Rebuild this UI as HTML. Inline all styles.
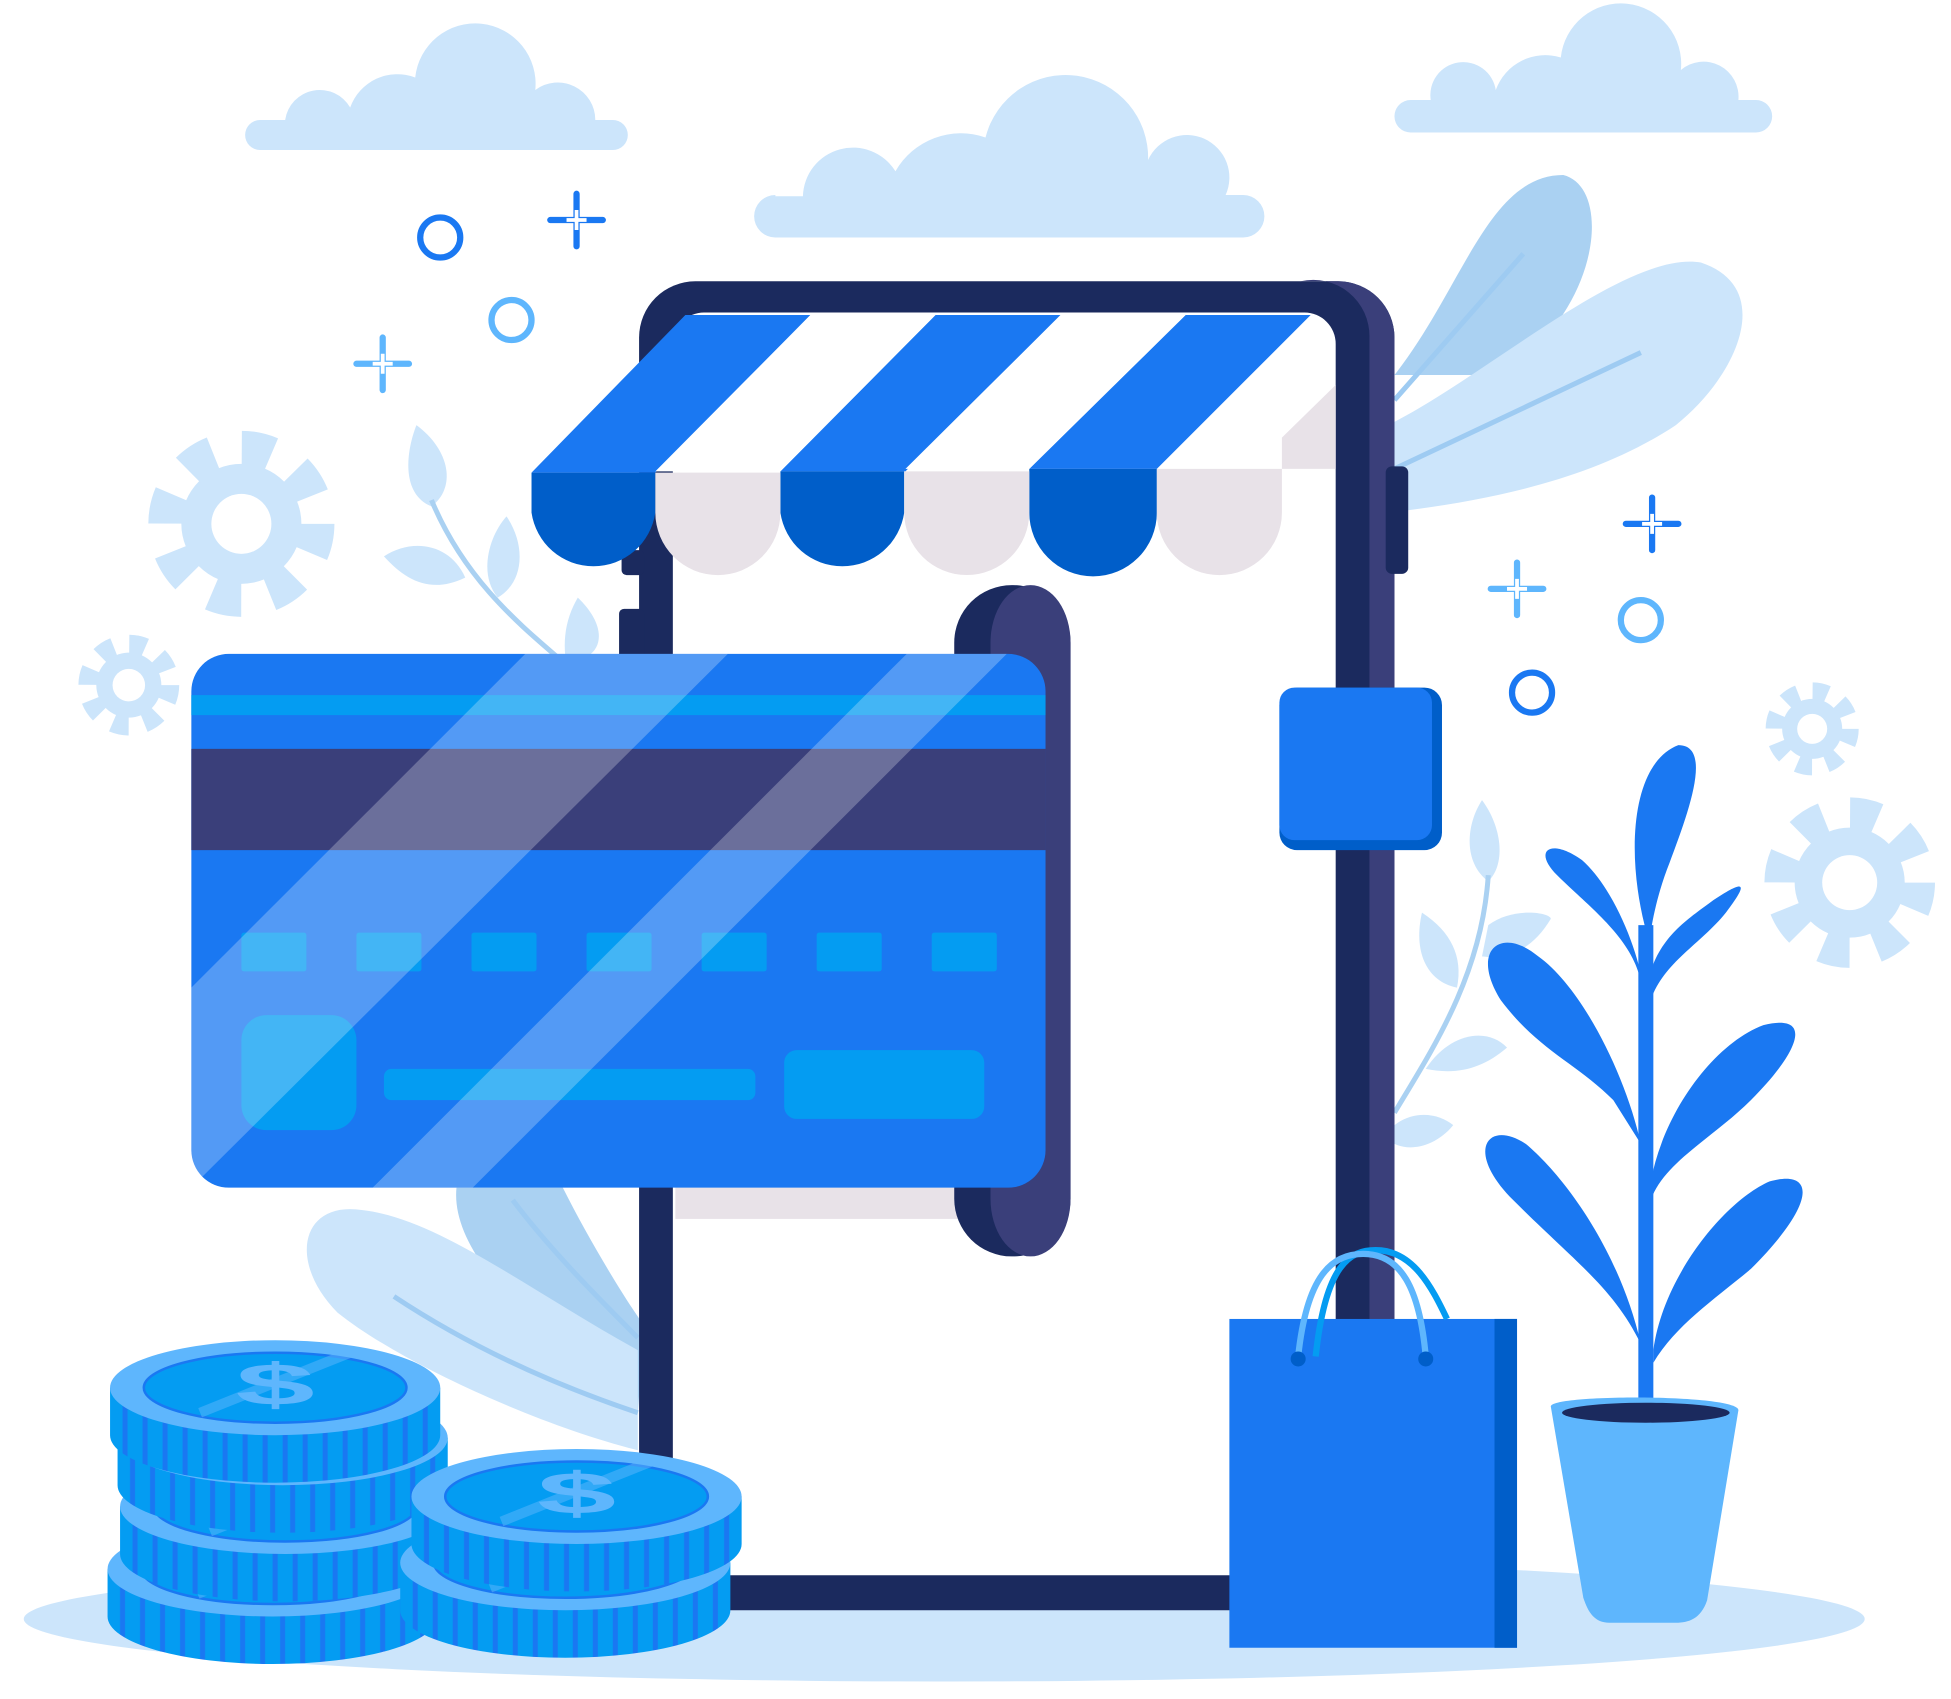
<!DOCTYPE html>
<html><head><style>html,body{margin:0;padding:0;background:#fff}svg{display:block}</style></head><body>
<svg width="1951" height="1699" viewBox="0 0 1560 1359" preserveAspectRatio="none" xmlns="http://www.w3.org/2000/svg">
<defs>
<pattern id="ribs" patternUnits="userSpaceOnUse" width="16" height="10" x="-132"><rect x="0" y="0" width="16" height="10" fill="#049cf2"/><rect x="10" y="0" width="4" height="10" fill="#1a78f2"/></pattern>
<g id="coin">
<path d="M-132 0 V38 A132 38 0 0 0 132 38 V0 Z" fill="url(#ribs)"/>
<ellipse cx="0" cy="0" rx="132" ry="38" fill="#5eb6fd"/>
<ellipse cx="0" cy="0" rx="105" ry="28" fill="#049cf2" stroke="#1a78f2" stroke-width="2"/>
<path d="M-60 20 L60 -28" stroke="#5eb6fd" stroke-width="8" opacity="0.5"/>
<text x="0" y="22" text-anchor="middle" font-family="Liberation Sans, sans-serif" font-weight="bold" font-size="76" fill="#5eb6fd" transform="scale(1.5,0.62)">$</text>
</g>
<g id="gear"><circle r="40" fill="#cce5fb"/><circle r="50" fill="none" stroke="#cce5fb" stroke-width="24" stroke-dasharray="20 19.3"/><circle r="20" fill="#fff"/></g>
</defs>
<ellipse cx="755" cy="1295" rx="736" ry="50" fill="#cce5fb"/>
<!-- clouds -->
<g fill="#cce5fb">
<path d="M208 96h20a28 28 0 0 1 52-10a40 40 0 0 1 52-24a48 48 0 0 1 96 10a30 30 0 0 1 48 24h14a12 12 0 0 1 0 24H208a12 12 0 0 1 0-24z"/>
<path d="M620 157h22a40 40 0 0 1 74-20a60 60 0 0 1 72-27a66 66 0 0 1 130 18a34 34 0 0 1 62 28h14a17 17 0 0 1 0 34H620a17 17 0 0 1 0-34z"/>
<path d="M1128 80h16a22 22 0 0 1 52-8a42 42 0 0 1 52-26a48 48 0 0 1 96 10a28 28 0 0 1 46 24h14a12 12 0 0 1 0 26H1128a12 12 0 0 1 0-26z"/>
</g>
<!-- leaves background -->
<path d="M1115 300 C1170 230 1190 140 1250 140 C1290 150 1280 250 1200 300 Z" fill="#aad1f2"/>
<path d="M1110 340 C1190 300 1300 200 1360 210 C1420 230 1390 300 1340 340 C1280 380 1200 400 1110 410 Z" fill="#cce5fb"/>
<path d="M1115 320 L1218 203 M1115 375 L1312 282" stroke="#9ecbf2" stroke-width="4" fill="none"/>
<path d="M510 1130 C420 1060 360 1000 365 950 L450 950 C470 990 500 1040 515 1060 Z" fill="#aad1f2"/>
<path d="M510 1160 C430 1140 320 1090 270 1050 C230 1010 240 960 290 968 C350 975 420 1030 510 1080 Z" fill="#cce5fb"/>
<path d="M315 1037 C380 1080 450 1110 510 1130 M410 960 C440 1000 480 1040 510 1070" stroke="#9ecbf2" stroke-width="4" fill="none"/>
<!-- small vines -->
<g fill="#cce5fb">
<path d="M333 340 C360 360 365 390 345 405 C320 395 325 360 333 340Z"/>
<path d="M307 445 C330 430 360 435 372 462 C345 475 325 465 307 445Z"/>
<path d="M405 413 C420 435 420 465 398 478 C383 460 390 430 405 413Z"/>
<path d="M462 478 C480 495 485 515 470 525 L452 525 C450 505 455 490 462 478Z"/>
<path d="M1185 640 C1200 660 1205 690 1190 705 C1170 690 1172 660 1185 640Z"/>
<path d="M1137 730 C1160 745 1170 765 1165 790 C1140 785 1130 760 1137 730Z"/>
<path d="M1190 740 C1210 725 1240 730 1240 735 C1225 760 1205 768 1185 765Z"/>
<path d="M1140 855 C1160 825 1190 822 1205 838 C1185 855 1165 860 1140 855Z"/>
<path d="M1115 900 C1130 888 1150 890 1162 900 C1150 915 1130 922 1115 915Z"/>
</g>
<path d="M345 400 C370 460 410 495 445 525 M1190 700 C1185 780 1145 840 1115 890" stroke="#aad1f2" stroke-width="4" fill="none"/>
<!-- sparkles -->
<g fill="none" stroke-width="5">
<circle cx="352" cy="190" r="16" stroke="#1a78f2"/>
<circle cx="409" cy="256" r="16" stroke="#5eb6fd"/>
<circle cx="1312" cy="496" r="16" stroke="#5eb6fd"/>
<circle cx="1225" cy="554" r="16" stroke="#1a78f2"/>
<path d="M461 155v42M440 176h42M1321 398v42M1300 419h42" stroke="#1a78f2" stroke-linecap="round"/>
<path d="M306 270v42M285 291h42M1213 450v42M1192 471h42" stroke="#5eb6fd" stroke-linecap="round"/>
</g>
<g fill="#fff" stroke="#fff" stroke-width="3"><path d="M461 168v16M453 176h16M1321 411v16M1313 419h16M306 283v16M298 291h16M1213 463v16M1205 471h16"/></g>
<!-- gears -->
<use href="#gear" transform="translate(193,419) scale(1.2)"/>
<use href="#gear" transform="translate(103,548) scale(0.65)"/>
<use href="#gear" transform="translate(1449,583) scale(0.6)"/>
<use href="#gear" transform="translate(1479,706) scale(1.1)"/>
<!-- phone -->
<rect x="511" y="225" width="604" height="1063" rx="45" fill="#1b2a5e"/>
<path d="M1040 225h30a45 45 0 0 1 45 45v973a45 45 0 0 1-20 38V270a45 45 0 0 0-55-45z" fill="#3a3f7a"/>
<rect x="538" y="250" width="530" height="1010" rx="25" fill="#fff"/>
<rect x="497" y="440" width="18" height="20" rx="4" fill="#1b2a5e"/>
<rect x="495" y="487" width="20" height="40" rx="4" fill="#1b2a5e"/>
<rect x="1108" y="373" width="18" height="86" rx="5" fill="#1b2a5e"/>
<!-- awning -->
<path d="M1025 350 L1068 308 V375 H1025Z" fill="#e8e2e8"/>
<path d="M548 252 H648 L524 378 H425 Z M748 252 H848 L724 377 H624 Z M948 252 H1048 L925 375 H823 Z" fill="#1a78f2"/>
<path d="M648 252 H748 L624 377 H524 Z M848 252 H948 L823 375 H724Z" fill="#fff"/>
<path d="M425 378 H524 V410 A50 50 0 0 1 425 410 Z M624 377 H723 V410 A50 50 0 0 1 624 410Z M823 375 H925 V410 A51 51 0 0 1 823 410Z" fill="#005ec9"/>
<path d="M524 378 H624 V410 A50 50 0 0 1 524 410Z M723 377 H823 V410 A50 50 0 0 1 723 410Z M925 375 H1025 V410 A50 50 0 0 1 925 410Z" fill="#e8e2e8"/>
<!-- slot behind card -->
<rect x="540" y="940" width="240" height="35" fill="#e8e2e8"/>
<rect x="763" y="468" width="93" height="537" rx="46" fill="#1b2a5e"/>
<rect x="792" y="468" width="64" height="537" rx="46" fill="#3a3f7a"/>
<!-- card -->
<rect x="153" y="523" width="683" height="427" rx="30" fill="#1a78f2"/>
<rect x="153" y="556" width="683" height="16" fill="#049cf2"/>
<rect x="153" y="599" width="683" height="81" fill="#3a3f7a"/>
<g fill="#049cf2">
<rect x="193" y="746" width="52" height="31" rx="2"/><rect x="285" y="746" width="52" height="31" rx="2"/><rect x="377" y="746" width="52" height="31" rx="2"/><rect x="469" y="746" width="52" height="31" rx="2"/><rect x="561" y="746" width="52" height="31" rx="2"/><rect x="653" y="746" width="52" height="31" rx="2"/><rect x="745" y="746" width="52" height="31" rx="2"/>
<rect x="193" y="812" width="92" height="92" rx="20"/>
<rect x="307" y="855" width="297" height="25" rx="6"/>
<rect x="627" y="840" width="160" height="55" rx="10"/>
</g>
<path d="M420 523 H582 L153 950 H153 V790 Z" fill="#fff" opacity="0.25"/>
<path d="M725 523 H805 L378 950 H298 Z" fill="#fff" opacity="0.25"/>
<!-- tag -->
<rect x="1023" y="550" width="130" height="130" rx="14" fill="#005ec9"/>
<rect x="1023" y="550" width="122" height="122" rx="12" fill="#1a78f2"/>
<!-- coins -->
<use href="#coin" transform="translate(218,1255)"/>
<use href="#coin" transform="translate(228,1205)"/>
<use href="#coin" transform="translate(226,1150)"/>
<use href="#coin" transform="translate(220,1110)"/>
<use href="#coin" transform="translate(452,1250)"/>
<use href="#coin" transform="translate(461,1197)"/>
<!-- bag -->
<rect x="983" y="1055" width="230" height="263" fill="#1a78f2"/>
<rect x="1195" y="1055" width="18" height="263" fill="#005ec9"/>
<path d="M1052 1085 C1060 1010 1080 1000 1100 1000 C1130 1000 1145 1030 1157 1055" stroke="#049cf2" stroke-width="5" fill="none"/>
<path d="M1038 1085 C1045 1020 1065 1003 1090 1003 C1120 1003 1135 1030 1140 1085" stroke="#5eb6fd" stroke-width="5" fill="none"/>
<circle cx="1038" cy="1087" r="6" fill="#005ec9"/><circle cx="1140" cy="1087" r="6" fill="#005ec9"/>
<!-- plant -->
<g fill="#1a78f2">
<path d="M1315 740 C1300 680 1305 610 1342 596 C1370 596 1350 650 1335 690 C1325 715 1320 740 1318 760Z"/>
<path d="M1312 785 C1305 750 1270 725 1245 700 C1225 680 1240 670 1265 688 C1290 710 1310 760 1314 790Z"/>
<path d="M1318 785 C1325 750 1350 735 1370 720 C1400 700 1395 710 1380 730 C1360 755 1330 770 1320 800Z"/>
<path d="M1312 915 C1300 860 1265 790 1230 765 C1200 740 1175 760 1200 800 C1230 840 1260 850 1290 880Z"/>
<path d="M1320 945 C1330 890 1370 835 1410 820 C1450 810 1440 840 1400 880 C1370 910 1330 930 1320 960Z"/>
<path d="M1312 1075 C1295 1000 1250 940 1220 915 C1190 895 1170 920 1210 960 C1260 1010 1290 1030 1312 1075Z"/>
<path d="M1322 1080 C1330 1020 1380 960 1415 945 C1450 935 1455 960 1400 1015 C1370 1040 1340 1060 1322 1090Z"/>
</g>
<rect x="1310" y="740" width="12" height="395" fill="#1a78f2"/>
<path d="M1240 1125 C1240 1115 1390 1115 1390 1128 L1365 1280 C1360 1295 1350 1298 1340 1298 H1287 C1275 1298 1270 1290 1266 1278 Z" fill="#5eb6fd"/>
<ellipse cx="1316" cy="1130" rx="67" ry="8" fill="#1b2a5e"/>
</svg>
</body></html>
